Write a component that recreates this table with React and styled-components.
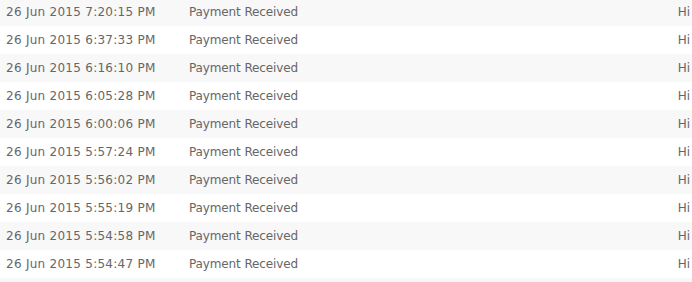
import React from "react";
import styled, { createGlobalStyle } from "styled-components";

const Global = createGlobalStyle`
  html, body { margin: 0; padding: 0; background: #fff; overflow: hidden; }
`;

const Table = styled.div`
  display: flex;
  flex-direction: column;
  width: 692px;
  height: 284px;
  overflow: hidden;
  margin-top: -2px;
  font-family: "DejaVu Sans", Verdana, sans-serif;
  font-size: 12px;
  color: #666;
`;

const Row = styled.div`
  display: grid;
  grid-template-columns: 183px 1fr auto;
  align-items: center;
  flex: 0 0 28px;
  padding: 0 2px 0 6px;
  background: ${(p) => (p.$striped ? "#f8f8f8" : "#fff")};
`;

const Cell = styled.div`
  white-space: nowrap;
  text-align: ${(p) => p.$align || "left"};
  letter-spacing: ${(p) => p.$spacing || "0"};
`;

const rows = [
  "26 Jun 2015 7:20:15 PM",
  "26 Jun 2015 6:37:33 PM",
  "26 Jun 2015 6:16:10 PM",
  "26 Jun 2015 6:05:28 PM",
  "26 Jun 2015 6:00:06 PM",
  "26 Jun 2015 5:57:24 PM",
  "26 Jun 2015 5:56:02 PM",
  "26 Jun 2015 5:55:19 PM",
  "26 Jun 2015 5:54:58 PM",
  "26 Jun 2015 5:54:47 PM",
  "",
];

export default function App() {
  return (
    <>
      <Global />
      <Table>
        {rows.map((d, i) => (
          <Row key={i} $striped={i % 2 === 0}>
            <Cell $spacing="0.27px">{d}</Cell>
            <Cell $spacing="-0.12px">{d ? "Payment Received" : ""}</Cell>
            <Cell $align="right">{d ? "Hi" : ""}</Cell>
          </Row>
        ))}
      </Table>
    </>
  );
}
